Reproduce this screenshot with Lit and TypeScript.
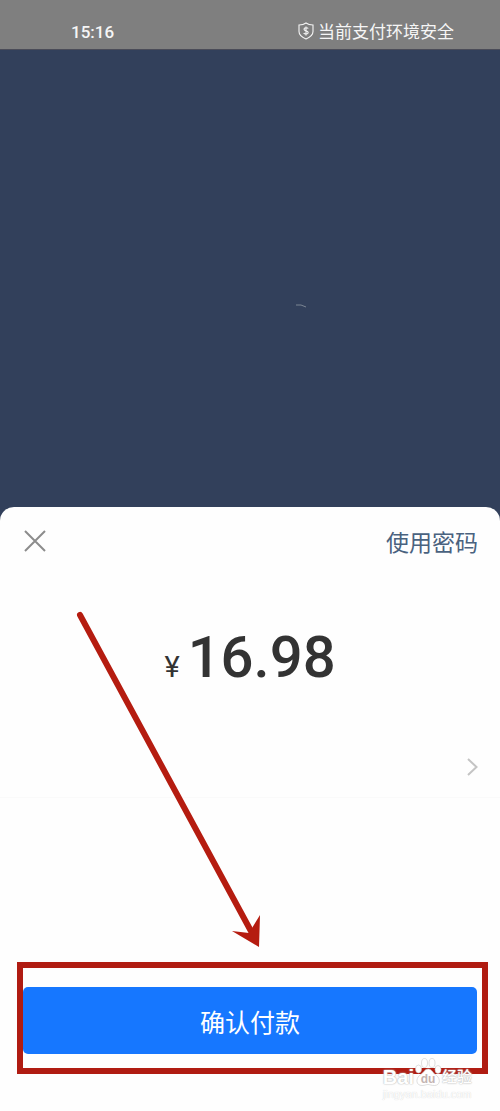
import { LitElement, html, css } from "lit";
import { customElement } from "lit/decorators.js";

@customElement("status-bar")
class StatusBar extends LitElement {
  static styles = css`
    :host {
      display: flex;
      justify-content: space-between;
      box-sizing: border-box;
      height: 50px;
      padding: 19px 46px 6px 71px;
      background: #7f7f7f;
      border-bottom: 1px solid #4b4c58;
      color: #f6f6f6;
      font-size: 17px;
      line-height: 24px;
    }
    .time {
      font-family: Roboto, sans-serif;
      font-weight: 500;
      line-height: 26px;
    }
    .safe {
      display: flex;
      align-items: center;
      gap: 4px;
    }
  `;
  render() {
    return html`
      <span class="time">15:16</span>
      <span class="safe">
        <svg width="16" height="18" viewBox="0 0 16 18" fill="none" stroke="currentColor" stroke-width="1.1" aria-hidden="true">
          <path d="M8 1C6 2.500 3.500 3 1 3V9.500C1 13.500 4.500 15.500 8 17C11.500 15.500 15 13.500 15 9.500V3C12.500 3 10 2.500 8 1Z" />
          <path d="M10.200 6.600C9.600 5.500 6 5.300 6 7.300C6 9.300 10.200 8.500 10.200 10.600C10.200 12.500 6.300 12.400 5.700 11M8 4.500V13.500" />
        </svg>
        当前支付环境安全
      </span>
    `;
  }
}

@customElement("site-watermark")
class SiteWatermark extends LitElement {
  static styles = css`
    :host {
      display: block;
      font-family: "Liberation Sans", "Noto Sans CJK SC", sans-serif;
      color: #ffffff;
      text-shadow: 0 0 1px #b0b0b0, 0 0 2px #c8c8c8;
    }
    .brand {
      display: flex;
      align-items: center;
      font-weight: 700;
      font-size: 20px;
      line-height: 22px;
    }
    .paw {
      flex: none;
      margin-top: -10px;
    }
    .du {
      fill: #c4b4b2;
      stroke: none;
      font-size: 12px;
      font-weight: 700;
      text-shadow: none;
    }
    .cn {
      font-size: 15px;
      font-weight: 500;
    }
    .site {
      font-size: 11px;
      line-height: 12px;
      text-shadow: 0 0 1px #c8c8c8;
    }
  `;
  render() {
    return html`
      <div class="brand">
        <span>Bai</span>
        <svg class="paw" width="28" height="30" viewBox="0 0 28 30" fill="#fff" stroke="#c9c9c9" stroke-width=".6" aria-hidden="true">
          <ellipse cx="4.500" cy="12" rx="3" ry="4" />
          <ellipse cx="10.500" cy="6" rx="3" ry="4.500" />
          <ellipse cx="18" cy="6" rx="3" ry="4.500" />
          <ellipse cx="24" cy="12.500" rx="3" ry="4" />
          <path d="M14.300 12C18 12 18.500 16 22.500 18.500C27 22 26 28.500 20.500 28.500C17 28.500 16 27.500 14 27.500C12 27.500 11 28.500 8 28.500C2 28.500 1.500 22 5.500 18.500C10 15.500 10.500 12 14.300 12Z" />
          <text class="du" x="14" y="26" text-anchor="middle">du</text>
        </svg>
        <span class="cn">经验</span>
      </div>
      <div class="site">jingyan.baidu.com</div>
    `;
  }
}

@customElement("payment-sheet")
class PaymentSheet extends LitElement {
  static styles = css`
    :host {
      display: block;
      position: relative;
      background: #fefefe;
      border-radius: 14px 14px 0 0;
      color: #333333;
    }
    button {
      font-family: inherit;
      border: 0;
      margin: 0;
      padding: 0;
      background: none;
      cursor: pointer;
    }
    svg {
      display: block;
    }
    .head {
      display: flex;
      align-items: center;
      justify-content: space-between;
      height: 68px;
      padding: 0 22px 0 24px;
    }
    .password {
      color: #4a627f;
      font-size: 23px;
      line-height: 32px;
      font-weight: 400;
    }
    .amount {
      display: flex;
      align-items: baseline;
      justify-content: center;
      gap: 8px;
      margin: 40px 0 0;
      font-family: Roboto, sans-serif;
      font-size: 58px;
      line-height: 84px;
      font-weight: 500;
    }
    .currency {
      font-size: 29px;
      font-weight: 400;
      line-height: 32px;
    }
    .method {
      display: flex;
      align-items: center;
      justify-content: flex-end;
      width: 100%;
      height: 62px;
      margin-top: 37px;
      padding: 0 22px;
      border-bottom: 1px solid #fafafa;
    }
    .pay {
      position: relative;
      margin: 189px 23px 0;
      padding-bottom: 57px;
    }
    .confirm {
      display: block;
      width: 100%;
      height: 67px;
      border-radius: 5px;
      background: #1677ff;
      color: #ffffff;
      font-size: 25px;
      line-height: 36px;
    }
    .frame {
      position: absolute;
      inset: -25px -11px 37px -6px;
      border: 6px solid #b01c12;
      pointer-events: none;
    }
    .arrow {
      position: absolute;
      top: 0;
      left: 0;
      pointer-events: none;
    }
    .mark {
      position: absolute;
      right: 28px;
      bottom: 11px;
      pointer-events: none;
    }
  `;
  render() {
    return html`
      <div class="head">
        <button aria-label="关闭">
          <svg width="22" height="22" viewBox="0 0 22 22" fill="none" stroke="#8c8c8c" stroke-width="2">
            <path d="M1 1L21 21M21 1L1 21" />
          </svg>
        </button>
        <button class="password">使用密码</button>
      </div>
      <p class="amount"><span class="currency">¥</span><span>16.98</span></p>
      <button class="method" aria-label="付款方式">
        <svg width="12" height="20" viewBox="0 0 12 20" fill="none" stroke="#c4c4c4" stroke-width="2">
          <path d="M2 2L10.500 10L2 18" />
        </svg>
      </button>
      <div class="pay">
        <button class="confirm">确认付款</button>
        <div class="frame"></div>
      </div>
      <svg class="arrow" width="280" height="450" viewBox="0 0 280 450" aria-hidden="true">
        <path d="M80 108L252 426" stroke="#b51c10" stroke-width="6" stroke-linecap="round" />
        <path d="M259 440L232 424L249 426L260 408Z" fill="#b51c10" />
      </svg>
      <site-watermark class="mark"></site-watermark>
    `;
  }
}

@customElement("app-root")
class AppRoot extends LitElement {
  static styles = css`
    :host {
      display: flex;
      flex-direction: column;
      min-height: 100vh;
      background: #32405b;
      font-family: "Noto Sans CJK SC", sans-serif;
    }
    .backdrop {
      flex: 1;
      display: grid;
      place-items: center;
      padding: 55px 0 0 102px;
    }
  `;
  render() {
    return html`
      <status-bar></status-bar>
      <div class="backdrop">
        <svg width="12" height="6" viewBox="0 0 12 6" fill="none" stroke="#7b8593" aria-hidden="true">
          <path d="M1 2Q6 1 11 4" />
        </svg>
      </div>
      <payment-sheet></payment-sheet>
    `;
  }
}
